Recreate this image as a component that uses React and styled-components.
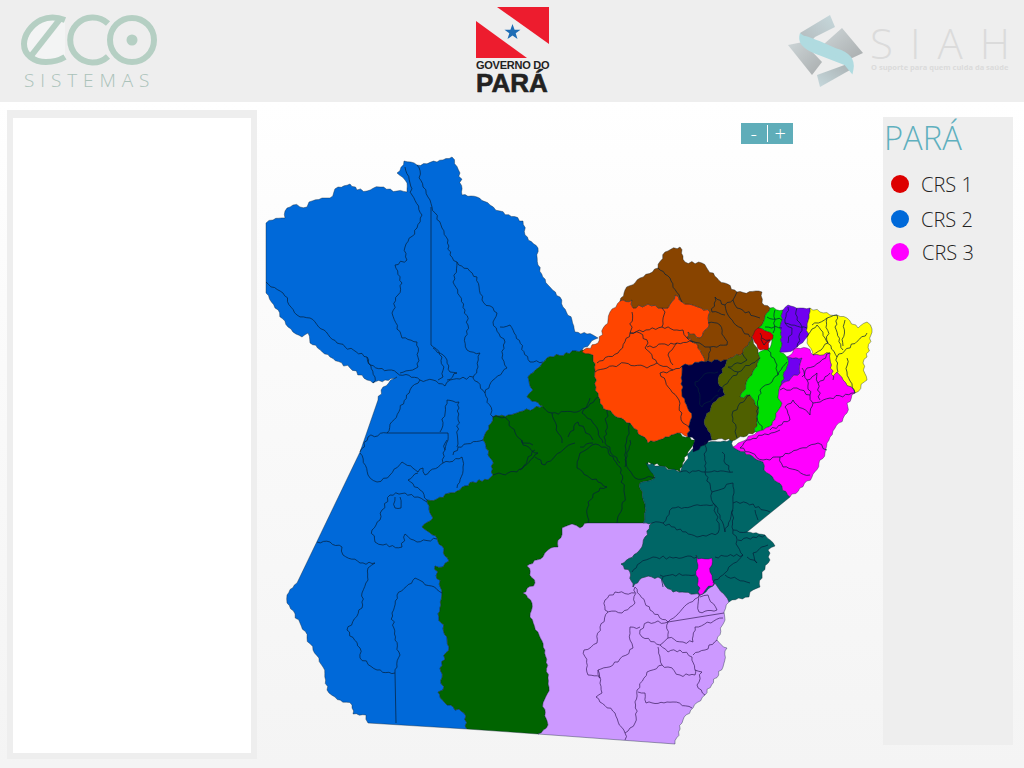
import React from 'react';
import styled, {createGlobalStyle} from 'styled-components';

// every map coordinate below is a page pixel, the svg viewBox starts at the map area's corner
const REGIONS = [
  {color: '#0069d9', points: '266,223 273,220 285,218 285,211 293,205 307,207 309,202 322,198 330,198 338,187 350,184 357,190 367,191 380,187 397,191 407,192 407,183 397,173 404,161 417,165 437,162 452,157 460,173 462,195 477,197 490,205 500,211 523,221 525,235 538,248 538,265 548,285 560,297 563,307 572,320 575,332 593,335 598,338 582,350 547,358 528,377 533,390 527,397 543,406 517,413 493,417 484,437 483,440 492,460 493,475 488,480 473,482 460,490 437,499 427,500 433,518 422,527 437,538 449,561 443,567 435,566 442,593 439,617 447,637 449,647 440,668 443,690 438,692 447,705 464,713 467,729 368,723 366,715 353,714 352,705 335,697 327,690 323,667 313,650 300,623 287,603 287,595 297,583 360,452 378,400 383,387 397,377 385,380 373,383 367,380 350,368 330,357 310,343 308,333 302,337 288,327 275,308 266,293'},
  {color: '#006400', points: '582,350 593,355 595,370 596,387 600,403 607,410 630,423 648,443 677,433 695,440 688,452 680,472 648,462 655,478 640,483 645,507 643,523 588,523 580,528 572,524 562,528 558,547 548,550 543,557 527,566 535,583 523,593 532,603 530,617 538,632 545,650 549,687 543,703 548,725 538,734 467,729 464,713 447,705 438,692 443,690 440,668 449,647 447,637 439,617 442,593 435,566 443,567 449,561 437,538 422,527 433,518 427,500 437,499 460,490 473,482 488,480 493,475 492,460 483,440 484,437 493,417 517,413 543,406 527,397 533,390 528,377 547,358'},
  {color: '#cc99ff', points: '652,523 588,523 580,528 572,524 562,528 558,547 548,550 543,557 527,566 535,583 523,593 532,603 530,617 538,632 545,650 549,687 543,703 548,725 538,734 675,744 683,720 693,708 705,695 723,667 727,648 717,640 725,620 724,612 729,602 715,583 700,595 673,592 658,577 645,577 633,587 630,572 621,564 637,553 642,547 645,537'},
  {color: '#006666', points: '646,463 680,472 690,452 705,442 733,440 733,447 763,462 764,470 777,482 790,497 747,532 765,535 775,546 768,550 770,560 762,572 760,587 750,592 749,597 729,602 715,583 700,595 673,592 658,577 645,577 633,587 630,572 621,564 637,553 642,547 645,537 652,523 643,523 645,507 640,483 655,478'},
  {color: '#ff4500', points: '620,301 632,300 633,308 648,304 662,308 668,308 675,295 682,302 698,307 710,312 708,328 700,338 688,332 687,338 698,345 705,362 682,366 682,393 692,417 688,437 677,433 648,443 630,423 607,410 600,403 596,387 595,370 593,355 582,352 598,343 608,320 610,312'},
  {color: '#884400', points: '620,301 625,290 640,278 658,268 665,252 680,247 685,262 702,263 717,278 737,292 762,292 762,303 770,308 762,325 752,337 743,353 727,360 705,362 698,345 687,338 688,332 700,338 708,328 710,312 698,307 682,302 675,295 668,308 662,308 648,304 633,308 632,300'},
  {color: '#000044', points: '682,366 705,362 727,360 718,382 725,395 713,403 704,422 712,440 693,452 695,440 688,437 692,417 682,393'},
  {color: '#4f6000', points: '727,360 743,353 752,337 758,353 760,358 740,397 750,395 758,407 755,432 735,440 712,440 704,422 713,403 725,395 718,382'},
  {color: '#00dd00', points: '770,308 783,310 780,328 782,337 780,352 787,357 787,367 780,387 778,398 782,403 772,425 757,432 755,432 758,407 750,395 740,397 760,358 758,353 770,348 773,335 758,328 762,325'},
  {color: '#dd0000', points: '758,328 773,335 768,350 760,350 752,337'},
  {color: '#7000f0', points: '783,310 788,305 800,308 810,308 807,337 797,347 787,352 780,352 782,337 780,328'},
  {color: '#7000f0', points: '787,357 802,358 800,373 783,383 780,387 787,367'},
  {color: '#ffff00', points: '810,308 820,312 837,315 847,318 858,328 867,322 872,329 867,357 863,363 867,380 855,393 843,380 837,372 833,380 830,353 813,355 807,343 807,337'},
  {color: '#ff00ff', points: '787,357 797,348 807,348 813,355 830,353 833,380 837,372 843,380 855,393 847,403 847,413 830,437 825,453 812,477 790,497 777,482 764,470 763,462 733,447 757,432 772,425 782,403 778,398 780,387 783,383 800,373 802,358'},
  {color: '#ff00ff', points: '696,555 698,559 712,558 710,572 714,583 700,595 696,575 698,565'},
];

const BORDERS = [
  // CRS 2
  '417,165 423,187 430,200 432,207 442,228 448,240 450,255 457,262 477,277 482,300 497,313 493,322 505,342 502,358 507,368 493,380 485,393 473,378',
  '405,167 410,183 412,195 422,215 417,228 405,247 407,260 395,265 402,283 392,313 402,338 417,342 418,367 400,373',
  '431,207 431,345 442,357 443,377 438,380',
  '433,348 447,360 450,372 457,373 447,380',
  '457,262 453,282 465,310 468,325 465,337 467,350 480,353 478,367 473,378',
  '500,327 510,325 530,362 543,362',
  '266,282 283,293 297,315 310,318 337,343 367,357 370,365 397,373 420,380 433,380 445,386 450,380 473,377',
  '367,357 375,377 373,383',
  '420,380 410,390 387,433 368,437 360,452',
  '387,433 448,433 445,450',
  '440,432 447,400 459,402 457,447',
  '485,393 493,417',
  '360,453 368,475 377,482 390,475 402,462 418,472 423,468 425,475 443,463 443,453 447,440',
  '408,480 418,473',
  '408,480 420,490 427,500',
  '443,463 462,457 463,467 457,488',
  '453,455 458,447 483,440',
  '427,502 405,493 390,495 382,510 380,520 372,530 375,542 383,545 402,547 405,534 417,542 437,539',
  '395,497 395,508 401,508 400,497',
  '317,542 330,542 342,547 343,555 360,563 375,563 368,568 368,580 362,593 362,608 347,630 360,648 360,658 377,670 395,673 400,655 395,640 392,613 397,595 415,578 423,582 442,593',
  '395,673 396,723',
  // green
  '535,450 520,470',
  '535,457 545,465 563,450 575,443',
  '620,467 605,447 592,445 580,453 577,468 598,482 607,487 600,488 588,502 588,523',
  '620,467 625,497 617,523',
  '630,440 626,463 635,478 655,478',
  '630,423 627,437 625,467',
  '607,410 605,443 620,463',
  '590,398 582,413 593,423 603,443',
  '580,447 593,443',
  '493,417 505,417 522,443 533,445',
  '543,407 552,413 558,433 562,443',
  '568,437 578,422 593,440',
  '552,413 577,412 588,407 598,397',
  '493,475 517,472 533,458 538,453 523,445 522,440',
  // orange
  '632,312 630,333 618,353 597,363',
  '630,333 640,333 648,343 645,348 657,363 673,370 682,366',
  '595,372 625,363 647,368 657,363',
  '660,373 673,370',
  '660,373 677,397 683,423 690,428',
  '630,333 662,327 665,312 662,308',
  '662,327 683,330 687,338',
  '647,347 677,343 668,355 673,365',
  '677,343 693,342',
  // brown
  '658,268 670,278 680,298 682,302',
  '737,292 733,300 725,305 715,297 712,312 725,315',
  '733,300 737,308 760,318',
  '725,305 730,318 750,337',
  '708,323 720,325 727,345 710,347 708,360',
  '687,338 705,347 710,347',
  // navy, olive
  '695,382 707,373 718,372',
  '695,382 702,407 718,395',
  '728,367 738,372 718,392',
  '742,353 747,360 728,367',
  '760,358 738,372',
  '750,395 740,403 732,415 737,438',
  // light green, red
  '767,317 782,320',
  '765,327 782,328',
  '775,310 773,333',
  '768,350 777,365 778,375 787,362',
  '778,375 772,382 760,390 757,417 762,430',
  '760,333 764,345 770,340 762,338',
  // purple
  '788,307 785,323 792,328 788,343',
  '797,308 797,320 802,327 797,347',
  '785,323 807,328',
  // yellow
  '812,325 827,318 837,315',
  '827,318 828,343 813,355',
  '837,315 835,327 843,350',
  '807,337 817,325 825,338 837,357 838,372',
  '837,357 867,333',
  '847,358 847,372 855,393',
  '845,320 843,346',
  // magenta
  '780,390 797,388 810,395 813,403 810,415 793,400 785,407 790,420 770,430',
  '813,403 830,398 855,393',
  '802,377 807,368 820,362 830,353',
  '802,368 807,380 817,373 818,383 830,373',
  '818,383 820,400',
  '807,380 810,395',
  '740,448 747,440 780,430',
  '740,448 763,460 780,457 797,450 818,443 827,450',
  '780,457 783,467 810,475',
  // teal
  '680,472 705,472 733,472',
  '705,442 705,472 712,492 733,483',
  '722,452 730,472',
  '733,483 733,503 733,530',
  '712,492 713,503 720,515 725,532 733,510',
  '713,503 718,517 718,533 697,537 663,523 672,508 713,505',
  '733,503 747,503 770,512',
  '755,510 758,520',
  '733,530 747,532',
  '733,530 738,547 743,555 715,557',
  '738,540 765,535',
  '743,555 713,583',
  '747,557 757,563 753,553 768,545',
  '725,575 750,583',
  '697,557 673,558 653,557 640,563 632,572',
  '660,575 695,575',
  '663,577 663,587',
  '652,523 663,523',
];

const THIN_BORDERS = [
  '635,587 635,603 622,613 605,610 605,600 615,592 635,593',
  '635,587 650,610 668,622 700,595',
  '668,622 724,613',
  '668,622 648,622 640,630 642,637 660,645 668,638 668,622',
  '640,627 630,627 630,640 633,648 618,662 598,670 600,678 588,675 584,650 597,643 600,627 608,612',
  '598,670 602,693 596,697 615,713 625,733 635,723 637,690 647,672 662,665 658,647',
  '662,665 668,667 680,675 695,675 692,657 680,650 668,652 660,645',
  '668,638 683,642 693,642 695,627 723,618',
  '693,655 705,650 717,640',
  '695,670 702,672 697,685 705,695',
  '638,692 645,693 646,703 673,702 692,708',
  '699,595 699,612 717,610 708,595 700,597',
  '625,733 625,740',
];

const LEGEND = [
  {label: 'CRS 1', color: '#dd0000', gap: 0, indent: 0},
  {label: 'CRS 2', color: '#0069d9', gap: 17, indent: 0},
  {label: 'CRS 3', color: '#ff00ff', gap: 15, indent: 1},
];

const noise = (a, b, c) => {
  const s = Math.sin(a * 12.9898 + b * 78.233 + c * 37.719) * 43758.5453;
  return s - Math.floor(s);
};

// adds the little wiggles of a municipal border. The jitter only depends on a segment's
// two ends, so neighbouring regions get the same edge. Long segments are ruler lines, they stay.
const roughen = (points, closed) => {
  const pts = points.split(' ').map(p => p.split(',').map(Number));
  const out = [];
  const count = closed ? pts.length : pts.length - 1;
  for (let s = 0; s < count; s++) {
    const a = pts[s];
    const b = pts[(s + 1) % pts.length];
    out.push(a.join(','));
    const len = Math.hypot(b[0] - a[0], b[1] - a[1]);
    if (len >= 50) continue;
    const forward = a[0] < b[0] || (a[0] === b[0] && a[1] < b[1]);
    const [p, q] = forward ? [a, b] : [b, a];
    const n = Math.floor(len / 3);
    for (let i = 1; i < n; i++) {
      const k = forward ? i : n - i;
      const off = (noise(p[0] + q[0], p[1] + q[1], k) - 0.5) * 3;
      const x = p[0] + ((q[0] - p[0]) * k) / n - ((q[1] - p[1]) / len) * off;
      const y = p[1] + ((q[1] - p[1]) * k) / n + ((q[0] - p[0]) / len) * off;
      out.push(`${x.toFixed(1)},${y.toFixed(1)}`);
    }
  }
  if (!closed) out.push(pts[pts.length - 1].join(','));
  return out.join(' ');
};

const GlobalStyle = createGlobalStyle`
  html, body {
    margin: 0;
    padding: 0;
  }
  body {
    font-family: "Open Sans", "Liberation Sans", sans-serif;
    background: #fff;
  }
`;

const Page = styled.div`
  width: 1024px;
  height: 768px;
  overflow: hidden;
  display: flex;
  flex-direction: column;
`;

const Header = styled.header`
  height: 102px;
  flex: none;
  background: #eeeeee;
  display: grid;
  grid-template-columns: 456px 312px 1fr;
  padding-left: 20px;
`;

const EcoLogo = styled.div`
  padding-top: 13px;
  display: flex;
  flex-direction: column;
`;

const EcoMarkSvg = styled.svg`
  display: block;
  filter: blur(0.3px);
`;

const EcoCaption = styled.span`
  margin: 3px 0 0 4px;
  font-family: "Open Sans", sans-serif;
  font-weight: 300;
  font-size: 19px;
  line-height: 20px;
  letter-spacing: 5.9px;
  color: #aac2b9;
`;

const GovLogo = styled.div`
  padding-top: 7px;
  width: 74px;
  display: flex;
  flex-direction: column;
`;

const GovLine = styled.span`
  font-family: "Liberation Sans", sans-serif;
  font-weight: 700;
  font-size: 11px;
  line-height: 11px;
  margin-top: 1px;
  letter-spacing: -0.25px;
  white-space: nowrap;
  color: #222222;
`;

const GovName = styled.span`
  font-family: "Liberation Sans", sans-serif;
  font-weight: 700;
  font-size: 26px;
  line-height: 25px;
  -webkit-text-stroke: 0.6px #222222;
  color: #222222;
`;

const SiahLogo = styled.div`
  display: flex;
  padding-top: 14px;
`;

const SiahMarkSvg = styled.svg`
  display: block;
  flex: none;
  filter: blur(0.4px);
`;

const SiahText = styled.div`
  margin: 8px 0 0 7px;
  display: flex;
  flex-direction: column;
  color: #dbdbdb;
`;

const SiahName = styled.span`
  font-family: "Open Sans", sans-serif;
  font-weight: 300;
  font-size: 42px;
  line-height: 42px;
  letter-spacing: 17px;
  white-space: nowrap;
`;

const SiahLastLetter = styled.span`
  letter-spacing: 0;
`;

const SiahSlogan = styled.span`
  font-family: "Open Sans", sans-serif;
  font-weight: 700;
  font-size: 7.5px;
  line-height: 10px;
  white-space: nowrap;
  margin: -2px 0 0 1px;
`;

const Main = styled.main`
  flex: 1;
  display: flex;
  align-items: flex-start;
  padding-left: 7px;
  background: linear-gradient(#ffffff 0%, #fbfbfb 30%, #f4f4f4 100%);
`;

const SidePanel = styled.aside`
  width: 238px;
  height: 635px;
  flex: none;
  margin-top: 8px;
  padding: 8px 6px 6px;
  background: #eeeeee;
`;

const SideInner = styled.div`
  height: 100%;
  background: #ffffff;
`;

const MapArea = styled.section`
  position: relative;
  width: 626px;
  height: 666px;
  flex: none;
`;

const MapSvg = styled.svg`
  display: block;
  width: 626px;
  height: 666px;
  filter: blur(0.3px);
`;

const Region = styled.polygon`
  fill: ${p => p.$color};
  stroke: #0c2030;
  stroke-opacity: 0.55;
  stroke-width: 0.7;
  stroke-linejoin: round;
`;

const Border = styled.polyline`
  fill: none;
  stroke: ${p => (p.$soft ? '#3c2060' : '#05203a')};
  stroke-opacity: 0.8;
  stroke-width: 0.9;
  stroke-linejoin: round;
`;

const ZoomBar = styled.div`
  position: absolute;
  top: 21px;
  left: 484px;
  width: 52px;
  height: 21px;
  background: #5fadb9;
  display: flex;
  align-items: center;
  color: #ffffff;
  font-family: "Open Sans", sans-serif;
  font-weight: 300;
  font-size: 20px;
  line-height: 21px;
`;

const ZoomButton = styled.button`
  flex: 1;
  height: 21px;
  padding: 0;
  border: 0;
  background: none;
  color: inherit;
  font: inherit;
`;

const ZoomDivider = styled.span`
  width: 1px;
  height: 17px;
  background: #ffffff;
`;

const Legend = styled.aside`
  width: 130px;
  height: 628px;
  flex: none;
  margin-top: 15px;
  background: #eeeeee;
`;

const LegendTitle = styled.h2`
  margin: 0;
  padding: 0 0 0 1px;
  height: 58px;
  font-family: "Open Sans", sans-serif;
  font-weight: 300;
  font-size: 32.7px;
  line-height: 42px;
  color: #5fb0be;
`;

const LegendRow = styled.div`
  display: flex;
  align-items: center;
  height: 18px;
  padding-left: 8px;
  margin-top: ${p => p.$gap}px;
`;

const Dot = styled.span`
  width: 18px;
  height: 18px;
  border-radius: 50%;
  background: ${p => p.$color};
`;

const LegendLabel = styled.span`
  margin-left: ${p => 12 + p.$indent}px;
  font-family: "Open Sans", sans-serif;
  font-weight: 300;
  font-size: 20px;
  color: #222222;
`;

const EcoMark = () => (
  <EcoMarkSvg width="140" height="54" viewBox="20 13 140 54" fill="none" stroke="#b5cfc3" strokeWidth="6">
    <path d="M65 20C57 17 48 17 41 20C31 25 24 35 24 44C24 55 34 62 46 62C53 62 60 60 65 57" fill="#f3f4f4" />
    <path d="M31 56L60 19" />
    <path d="M108 23.500A22.500 22.500 0 1 0 108 56.500" />
    <circle cx="132" cy="40" r="22" />
    <circle cx="132" cy="40" r="5.500" fill="#b5cfc3" stroke="none" />
  </EcoMarkSvg>
);

const GovFlag = () => (
  <svg width="74" height="52" viewBox="476 7 74 52">
    <path d="M497 7H549V44Z" fill="#ed1c2e" />
    <path d="M476 21V58H527Z" fill="#ed1c2e" />
    <path d="M512.500 24L514.600 29.800H520.500L515.700 33.300L517.500 39L512.500 35.500L507.500 39L509.300 33.300L504.500 29.800H510.400Z" fill="#1f6db5" />
  </svg>
);

const SiahMark = () => (
  <SiahMarkSvg width="75" height="73" viewBox="788 14 75 73">
    <defs>
      <linearGradient id="ribbonTop" x1="0" y1="1" x2="1" y2="0">
        <stop offset="0" stopColor="#b3b9bb" />
        <stop offset="1" stopColor="#c6d8dc" />
      </linearGradient>
      <linearGradient id="ribbonGrey" x1="0" y1="0" x2="1" y2="1">
        <stop offset="0" stopColor="#cdd5d7" />
        <stop offset="1" stopColor="#a9adae" />
      </linearGradient>
      <linearGradient id="ribbonLow" x1="0" y1="1" x2="1" y2="0">
        <stop offset="0" stopColor="#c6d8dc" />
        <stop offset="1" stopColor="#aab1b3" />
      </linearGradient>
    </defs>
    <path d="M800 33L830 15L835 27L815 37L806 47Z" fill="url(#ribbonTop)" />
    <path d="M824 44L842 28L863 53L850 59L841 52L828 48Z" fill="url(#ribbonGrey)" />
    <path d="M788 45L803 42L822 62L812 75Z" fill="url(#ribbonGrey)" />
    <path d="M817 75L850 63L850 70L820 87Z" fill="url(#ribbonLow)" />
    <path d="M800 33C797 43 806 47 815 50L846 62L851 70C853 60 847 56 838 53L819 45C812 42 806 38 800 33Z" fill="#b0dbe0" />
    <path d="M802 38C801 44 808 48 815 51L846 63L851 69C853 59 846 54 836 51L818 43C812 41 806 38 802 38Z" fill="#b0dbe0" stroke="#b0dbe0" strokeWidth="5" />
  </SiahMarkSvg>
);

export default class extends React.Component {
  render() {
    return (
      <Page>
        <GlobalStyle />
        <Header>
          <EcoLogo>
            <EcoMark />
            <EcoCaption>SISTEMAS</EcoCaption>
          </EcoLogo>
          <GovLogo>
            <GovFlag />
            <GovLine>GOVERNO DO</GovLine>
            <GovName>PARÁ</GovName>
          </GovLogo>
          <SiahLogo>
            <SiahMark />
            <SiahText>
              <SiahName>SIA<SiahLastLetter>H</SiahLastLetter></SiahName>
              <SiahSlogan>O suporte para quem cuida da saúde</SiahSlogan>
            </SiahText>
          </SiahLogo>
        </Header>
        <Main>
          <SidePanel>
            <SideInner />
          </SidePanel>
          <MapArea>
            <MapSvg viewBox="257 102 626 666">
              {REGIONS.map((region, i) => <Region key={i} points={roughen(region.points, true)} $color={region.color} />)}
              {BORDERS.map((points, i) => <Border key={i} points={roughen(points, false)} />)}
              {THIN_BORDERS.map((points, i) => <Border key={i} points={roughen(points, false)} $soft />)}
            </MapSvg>
            <ZoomBar>
              <ZoomButton>-</ZoomButton>
              <ZoomDivider />
              <ZoomButton>+</ZoomButton>
            </ZoomBar>
          </MapArea>
          <Legend>
            <LegendTitle>PARÁ</LegendTitle>
            {LEGEND.map((item) => (
              <LegendRow key={item.label} $gap={item.gap}>
                <Dot $color={item.color} />
                <LegendLabel $indent={item.indent}>{item.label}</LegendLabel>
              </LegendRow>
            ))}
          </Legend>
        </Main>
      </Page>
    );
  }
}
